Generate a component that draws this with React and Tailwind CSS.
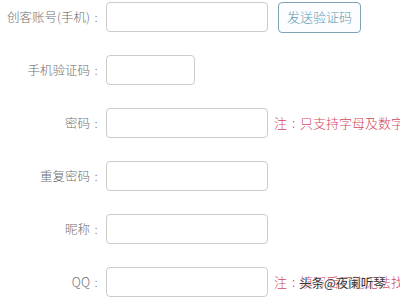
import React from "react";

const font = { fontFamily: '"Noto Sans CJK SC", "Microsoft YaHei", sans-serif' };

function Row({ label, short, children }) {
  return (
    <div className="flex items-center h-[30px]">
      <div className="w-[102px] shrink-0 flex justify-end items-center text-[12.5px] text-[#707070] font-light whitespace-nowrap">
        <span>{label}</span>
        <span className="w-[12px] text-center">:</span>
      </div>
      <div className={`ml-[4px] h-[30px] ${short ? "w-[89px]" : "w-[162px]"} shrink-0 rounded-[4px] border border-[#ccc] bg-white`} />
      {children}
    </div>
  );
}

function Note({ children }) {
  return (
    <div className="ml-[6px] flex items-center text-[13px] text-[#d2485e] font-light whitespace-nowrap">
      <span>注</span>
      <span className="w-[13px] text-center">:</span>
      <span>{children}</span>
    </div>
  );
}

export default function App() {
  return (
    <div className="relative w-[400px] h-[300px] overflow-hidden bg-white pt-[2px]" style={font}>
      <div className="flex flex-col gap-[23px]">
        <Row label="创客账号(手机)">
          <div className="ml-[10px] h-[31px] w-[83px] shrink-0 rounded-[4px] border border-[#7fa3b3] bg-[#fbfdfe] flex items-center justify-center text-[13px] text-[#5b9ab5] font-light whitespace-nowrap">
            发送验证码
          </div>
        </Row>
        <Row label="手机验证码" short />
        <Row label="密码">
          <Note>只支持字母及数字</Note>
        </Row>
        <Row label="重复密码" />
        <Row label="昵称" />
        <Row label="QQ">
          <Note>填写后可能无法找回去</Note>
        </Row>
      </div>
      <div
        className="absolute left-[299px] top-[274px] text-[12.5px] text-[#333] whitespace-nowrap"
        style={{ textShadow: "0 0 2px #fff, 0 0 2px #fff, 0 0 1px #fff" }}
      >
        头条@夜阑听琴
      </div>
    </div>
  );
}
